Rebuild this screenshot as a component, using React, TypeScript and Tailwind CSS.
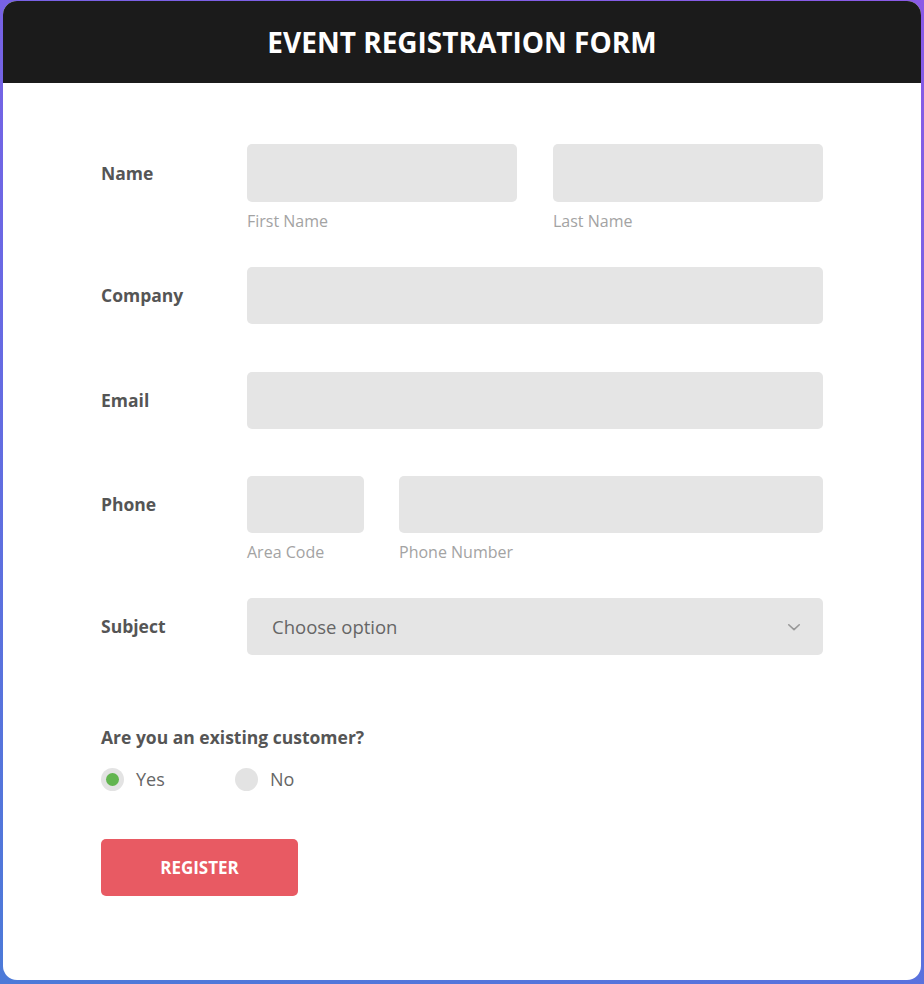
import React from "react";

const font = { fontFamily: '"Open Sans", "Noto Sans", sans-serif' };

function Helper({ children }: { children: React.ReactNode }) {
  return <div className="mt-[9px] text-[16px] leading-[20px] text-[#a3a3a3]">{children}</div>;
}

function Label({ children, h = 58 }: { children: React.ReactNode; h?: number }) {
  return (
    <div
      className={`w-[146px] shrink-0 flex items-center text-[17.5px] font-bold text-[#555] ${h === 58 ? "h-[58px]" : "h-[57px]"}`}
    >
      {children}
    </div>
  );
}

export default function App() {
  return (
    <div
      className="min-h-[984px] w-full pt-[1px] px-[3px] pb-[4px] bg-[linear-gradient(200deg,#8a5ae6_0%,#6a68e4_45%,#4c7ad8_100%)]"
      style={font}
    >
      <div className="h-[979px] rounded-[14px] bg-white overflow-hidden flex flex-col">
        <div className="h-[82px] shrink-0 bg-[#1b1b1b] flex items-center justify-center">
          <h1 className="text-[28px] font-bold text-white pb-[1px]">EVENT REGISTRATION FORM</h1>
        </div>

        <div className="px-[98px] pt-[61px]">
          {/* Name */}
          <div className="flex items-start">
            <Label>Name</Label>
            <div className="flex-1 flex gap-[36px]">
              <div className="flex-1">
                <div className="h-[58px] rounded-[5px] bg-[#e5e5e5]" />
                <Helper>First Name</Helper>
              </div>
              <div className="flex-1">
                <div className="h-[58px] rounded-[5px] bg-[#e5e5e5]" />
                <Helper>Last Name</Helper>
              </div>
            </div>
          </div>

          {/* Company */}
          <div className="flex items-start mt-[36px]">
            <Label h={57}>Company</Label>
            <div className="flex-1 h-[57px] rounded-[5px] bg-[#e5e5e5]" />
          </div>

          {/* Email */}
          <div className="flex items-start mt-[48px]">
            <Label h={57}>Email</Label>
            <div className="flex-1 h-[57px] rounded-[5px] bg-[#e5e5e5]" />
          </div>

          {/* Phone */}
          <div className="flex items-start mt-[47px]">
            <Label h={57}>Phone</Label>
            <div className="flex-1 flex gap-[35px]">
              <div className="w-[117px]">
                <div className="h-[57px] rounded-[5px] bg-[#e5e5e5]" />
                <Helper>Area Code</Helper>
              </div>
              <div className="flex-1">
                <div className="h-[57px] rounded-[5px] bg-[#e5e5e5]" />
                <Helper>Phone Number</Helper>
              </div>
            </div>
          </div>

          {/* Subject */}
          <div className="flex items-start mt-[36px]">
            <Label h={57}>Subject</Label>
            <div className="flex-1 h-[57px] rounded-[5px] bg-[#e5e5e5] flex items-center justify-between pl-[25px] pr-[20px]">
              <span className="text-[18.5px] text-[#666]">Choose option</span>
              <svg width="18" height="18" viewBox="0 0 24 24" fill="none" stroke="#999" strokeWidth="2.2" strokeLinecap="round" strokeLinejoin="round">
                <path d="M5 9l7 6.5 7-6.5" />
              </svg>
            </div>
          </div>

          {/* Customer */}
          <div className="mt-[70px] text-[17.5px] font-bold text-[#555] leading-[24px]">Are you an existing customer?</div>
          <div className="mt-[17px] flex items-center">
            <div className="flex items-center w-[134px]">
              <span className="w-[23px] h-[23px] rounded-full bg-[#e3e3e3] flex items-center justify-center">
                <span className="w-[13px] h-[13px] rounded-full bg-[#62b54f]" />
              </span>
              <span className="ml-[12px] text-[18px] text-[#666]">Yes</span>
            </div>
            <div className="flex items-center">
              <span className="w-[23px] h-[23px] rounded-full bg-[#e3e3e3]" />
              <span className="ml-[12px] text-[18px] text-[#666]">No</span>
            </div>
          </div>

          <button className="mt-[46px] w-[197px] h-[57px] rounded-[5px] bg-[#e85a63] text-white text-[17px] font-bold">
            REGISTER
          </button>
        </div>
      </div>
    </div>
  );
}
